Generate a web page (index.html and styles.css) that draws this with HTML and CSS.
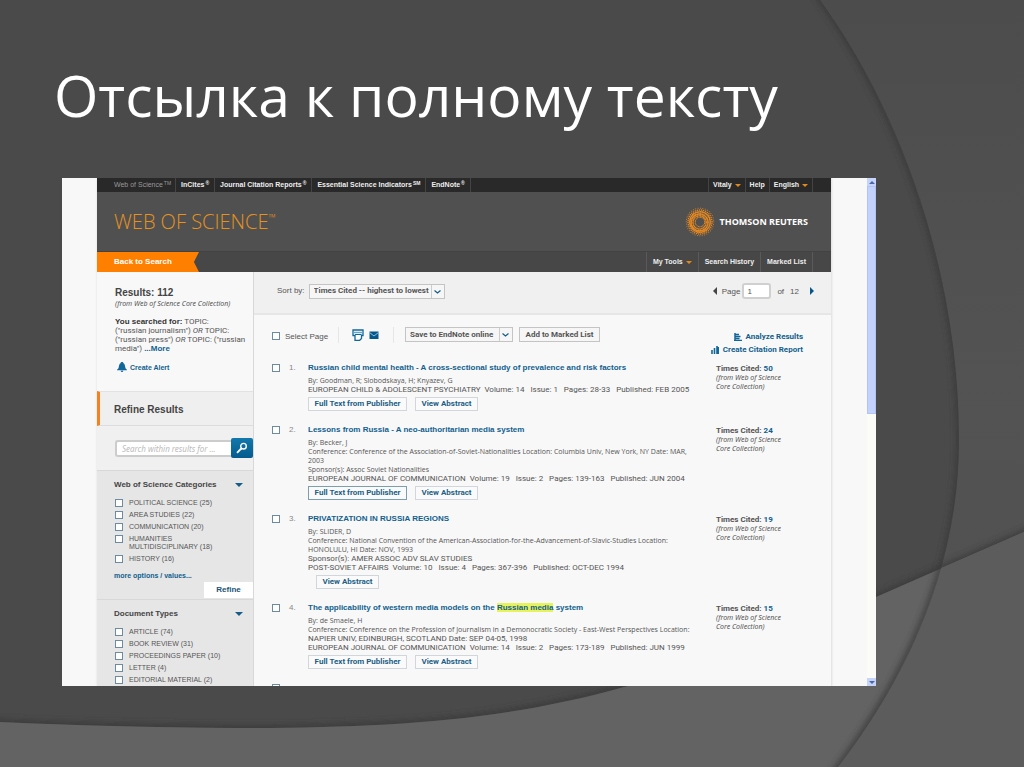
FILE: index.html
```html
<!DOCTYPE html>
<html lang="ru">
<head>
<meta charset="utf-8">
<title>Отсылка к полному тексту</title>
<link rel="stylesheet" href="styles.css">
</head>
<body>
<svg class="backdrop" viewBox="0 0 1024 767" preserveAspectRatio="none" aria-hidden="true">
  <defs>
    <linearGradient id="right" x1="0" y1="0" x2="0" y2="1"><stop offset="0" stop-color="#4c4c4c"/><stop offset=".5" stop-color="#535353"/><stop offset="1" stop-color="#505050"/></linearGradient>
    <filter id="soft" x="-10%" y="-10%" width="120%" height="120%"><feGaussianBlur stdDeviation="3"/></filter>
    <clipPath id="outside"><path d="M0 0H820C900 110 959 270 959 440C959 570 905 680 838 767H0Z"/></clipPath>
    <clipPath id="above"><path d="M0 0H1024V532L876 597C760 648 690 670 624 687C500 722 380 728 235 728Q110 727 0 722Z"/></clipPath>
  </defs>
  <path fill="url(#right)" d="M820 0C900 110 959 270 959 440C959 570 905 680 838 767H1024V0Z"/>
  <g clip-path="url(#above)"><path class="shade" filter="url(#soft)" d="M-10 722Q110 727 235 728C380 728 500 722 624 687C690 670 760 648 876 597L1034 528"/></g>
  <path fill="#636363" d="M0 722Q110 727 235 728C380 728 500 722 624 687C690 670 760 648 876 597L1024 532V767H0Z"/>
  <path fill="#5c5c5c" d="M941 568L1024 532V767H838C880 710 920 645 941 568Z"/>
  <g clip-path="url(#outside)"><path class="shade" filter="url(#soft)" d="M815 -8C900 110 959 270 959 440C959 570 905 680 832 775"/></g>
</svg>

<main class="slide">
  <h1 class="slide-title">Отсылка к полному тексту</h1>

  <section class="screen">
    <div class="page">
      <header>
        <div class="topbar">
          <nav class="links">
            <a class="current" href="#">Web of Science <sup>TM</sup></a>
            <a href="#">InCites <sup>®</sup></a>
            <a href="#">Journal Citation Reports <sup>®</sup></a>
            <a href="#">Essential Science Indicators <sup>SM</sup></a>
            <a href="#">EndNote <sup>®</sup></a>
          </nav>
          <nav class="links account">
            <a href="#">Vitaly <i class="tri"></i></a>
            <a href="#">Help</a>
            <a href="#">English <i class="tri"></i></a>
          </nav>
        </div>
        <div class="brand">
          <div class="wos">WEB OF SCIENCE<sup>™</sup></div>
          <div class="thomson">
            <svg class="swirl" viewBox="0 0 30 30" aria-hidden="true">
              <g fill="none" stroke="#e98a20" stroke-linecap="round">
                <circle cx="15" cy="15" r="13.8" stroke-width="1" stroke-dasharray="0 2.41"/>
                <circle cx="15" cy="15" r="12" stroke-width="1.5" stroke-dasharray="0 2.09" transform="rotate(6 15 15)"/>
                <circle cx="15" cy="15" r="10.200" stroke-width="1.900" stroke-dasharray="0 1.780" transform="rotate(12 15 15)"/>
                <circle cx="14.600" cy="15.400" r="8.400" stroke-width="1.900" stroke-dasharray="0 1.760"/>
                <circle cx="14.600" cy="15.400" r="6.600" stroke-width="1.600" stroke-dasharray="0 1.600"/>
                <circle cx="15" cy="15" r="4.800" stroke-width="1.200" stroke-dasharray="0 1.500"/>
              </g>
            </svg>
            <span>THOMSON REUTERS</span>
          </div>
        </div>
        <div class="navbar">
          <a class="back" href="#">Back to Search</a>
          <nav class="tools">
            <a href="#">My Tools <i class="tri"></i></a>
            <a href="#">Search History</a>
            <a href="#">Marked List</a>
          </nav>
        </div>
      </header>

      <div class="columns">
        <aside class="sidebar">
          <div class="summary">
            <h2>Results: 112</h2>
            <p class="source">(from Web of Science Core Collection)</p>
            <p class="query"><b>You searched for:</b> TOPIC:<br>("russian journalism") <i>OR</i> TOPIC:<br>("russian press") <i>OR</i> TOPIC: ("russian<br>media") <a href="#">...More</a></p>
            <a class="alert" href="#"><svg viewBox="0 0 10 10" aria-hidden="true"><path fill="#12679a" d="M5 0C6 0 6.4.7 6.5 1.2C8 2 8 4 8.3 5.5C8.5 6.6 9.2 7.2 10 7.7V8.3H0V7.7C.8 7.2 1.5 6.6 1.7 5.5C2 4 2 2 3.5 1.2C3.6.7 4 0 5 0ZM3.6 8.8H6.4Q6.2 10 5 10T3.600 8.800Z"/></svg>Create Alert</a>
          </div>
          <h2 class="refine-title">Refine Results</h2>
          <form class="search">
            <input type="text" aria-label="Search within results" placeholder="Search within results for ...">
            <button type="button" aria-label="Search"><svg viewBox="0 0 12 12" aria-hidden="true"><circle cx="7.500" cy="4.200" r="2.800" fill="none" stroke="#fff" stroke-width="1.400"/><path d="M5.300 6.500L1.500 10.300" stroke="#fff" stroke-width="1.800" stroke-linecap="round"/></svg></button>
          </form>
          <fieldset class="facet">
            <legend><span>Web of Science Categories</span><i class="tri blue"></i></legend>
            <label><input type="checkbox"><span>POLITICAL SCIENCE (25)</span></label>
            <label><input type="checkbox"><span>AREA STUDIES (22)</span></label>
            <label><input type="checkbox"><span>COMMUNICATION (20)</span></label>
            <label><input type="checkbox"><span>HUMANITIES<br>MULTIDISCIPLINARY (18)</span></label>
            <label><input type="checkbox"><span>HISTORY (16)</span></label>
            <a class="more" href="#">more options / values...</a>
            <button class="refine" type="button">Refine</button>
          </fieldset>
          <fieldset class="facet">
            <legend><span>Document Types</span><i class="tri blue"></i></legend>
            <label><input type="checkbox"><span>ARTICLE (74)</span></label>
            <label><input type="checkbox"><span>BOOK REVIEW (31)</span></label>
            <label><input type="checkbox"><span>PROCEEDINGS PAPER (10)</span></label>
            <label><input type="checkbox"><span>LETTER (4)</span></label>
            <label><input type="checkbox"><span>EDITORIAL MATERIAL (2)</span></label>
          </fieldset>
        </aside>

        <div class="content">
          <div class="sortbar">
            <label class="sort">Sort by:
              <select class="drop sort-drop"><option>Times Cited -- highest to lowest</option></select>
            </label>
            <div class="pager">
              <button type="button" class="prev" aria-label="Previous page"></button>
              <label>Page <input type="text" value="1"></label>
              <span>of</span><span>12</span>
              <button type="button" class="next" aria-label="Next page"></button>
            </div>
          </div>

          <div class="actions">
            <label class="select-page"><input type="checkbox">Select Page</label>
            <div class="icons">
              <button type="button" aria-label="Print"><svg viewBox="0 0 12 12" aria-hidden="true"><path d="M1 1H11V6.500H9.500V9.500L7.500 11.500H3V6.500H1Z" fill="#fff" stroke="#12679a" stroke-width="1.300"/><path d="M2 3.500H10" stroke="#5fa6cb" stroke-width="1.500"/><path d="M3 5.500H9.500" stroke="#12679a"/></svg></button>
              <button type="button" aria-label="E-mail"><svg viewBox="0 0 12 12" aria-hidden="true"><path d="M1.500 2.500H10.500V10H1.500Z" fill="#07588a"/><path d="M1.500 3.500L6 7L10.500 3.500" fill="none" stroke="#8ec3df"/></svg></button>
            </div>
            <select class="drop save-drop" aria-label="Save"><option>Save to EndNote online</option></select>
            <button class="marked" type="button">Add to Marked List</button>
            <div class="reports">
              <a href="#"><svg viewBox="0 0 8 8" aria-hidden="true"><path d="M1 0V8M1 1.500H5M1 3.500H6.500M1 5.500H5.500M0 7.500H8" stroke="#12679a" stroke-width="1.500"/></svg>Analyze Results</a>
              <a href="#"><svg viewBox="0 0 8 8" aria-hidden="true"><path d="M1 8V4M3.500 8V2M6 8V0M7.500 8V1" stroke="#12679a" stroke-width="1.600"/></svg>Create Citation Report</a>
            </div>
          </div>

          <ol class="results">
            <li>
              <input type="checkbox" aria-label="Select record 1"><span class="num">1.</span>
              <article>
                <h3><a href="#">Russian child mental health - A cross-sectional study of prevalence and risk factors</a></h3>
                <p>By: Goodman, R; Slobodskaya, H; Knyazev, G</p>
                <p class="journal">EUROPEAN CHILD &amp; ADOLESCENT PSYCHIATRY&nbsp; Volume: 14 &nbsp; Issue: 1 &nbsp; Pages: 28-33 &nbsp; Published: FEB 2005</p>
                <div class="buttons"><button type="button">Full Text from Publisher</button><button type="button">View Abstract</button></div>
              </article>
              <p class="cited"><b>Times Cited: <a href="#">50</a></b><br><i>(from Web of Science<br>Core Collection)</i></p>
            </li>
            <li>
              <input type="checkbox" aria-label="Select record 2"><span class="num">2.</span>
              <article>
                <h3><a href="#">Lessons from Russia - A neo-authoritarian media system</a></h3>
                <p>By: Becker, J<br>Conference: Conference of the Association-of-Soviet-Nationalities Location: Columbia Univ, New York, NY Date: MAR,<br>2003<br>Sponsor(s): Assoc Soviet Nationalities</p>
                <p class="journal">EUROPEAN JOURNAL OF COMMUNICATION&nbsp; Volume: 19 &nbsp; Issue: 2 &nbsp; Pages: 139-163 &nbsp; Published: JUN 2004</p>
                <div class="buttons"><button class="active" type="button">Full Text from Publisher</button><button type="button">View Abstract</button></div>
              </article>
              <p class="cited"><b>Times Cited: <a href="#">24</a></b><br><i>(from Web of Science<br>Core Collection)</i></p>
            </li>
            <li>
              <input type="checkbox" aria-label="Select record 3"><span class="num">3.</span>
              <article>
                <h3><a href="#">PRIVATIZATION IN RUSSIA REGIONS</a></h3>
                <p>By: SLIDER, D<br>Conference: National Convention of the American-Association-for-the-Advancement-of-Slavic-Studies Location:<br>HONOLULU, HI Date: NOV, 1993</p>
                <p class="journal">Sponsor(s): AMER ASSOC ADV SLAV STUDIES<br>POST-SOVIET AFFAIRS&nbsp; Volume: 10 &nbsp; Issue: 4 &nbsp; Pages: 367-396 &nbsp; Published: OCT-DEC 1994</p>
                <div class="buttons lone"><button type="button">View Abstract</button></div>
              </article>
              <p class="cited"><b>Times Cited: <a href="#">19</a></b><br><i>(from Web of Science<br>Core Collection)</i></p>
            </li>
            <li>
              <input type="checkbox" aria-label="Select record 4"><span class="num">4.</span>
              <article>
                <h3><a href="#">The applicability of western media models on the <mark>Russian media</mark> system</a></h3>
                <p>By: de Smaele, H<br>Conference: Conference on the Profession of Journalism in a Demonocratic Society - East-West Perspectives Location:</p>
                <p class="journal">NAPIER UNIV, EDINBURGH, SCOTLAND Date: SEP 04-05, 1998<br>EUROPEAN JOURNAL OF COMMUNICATION&nbsp; Volume: 14 &nbsp; Issue: 2 &nbsp; Pages: 173-189 &nbsp; Published: JUN 1999</p>
                <div class="buttons"><button type="button">Full Text from Publisher</button><button type="button">View Abstract</button></div>
              </article>
              <p class="cited"><b>Times Cited: <a href="#">15</a></b><br><i>(from Web of Science<br>Core Collection)</i></p>
            </li>
            <li><input type="checkbox" aria-label="Select record 5"></li>
          </ol>
        </div>
      </div>
    </div>
    <div class="scrollbar" aria-hidden="true"><i class="arrow up"></i><i class="thumb"></i><i class="arrow down"></i></div>
  </section>
</main>
</body>
</html>
```
FILE: styles.css
```css
* { box-sizing: border-box; }
body { margin: 0; min-height: 100vh; background: #4a4a4a; font: 8px/9px "Liberation Sans", Arial, sans-serif; color: #555; overflow: hidden; }
h1, h2, h3, p, ol { margin: 0; padding: 0; }
a { color: #12608d; text-decoration: none; }
button, input, select { font: inherit; color: inherit; margin: 0; padding: 0; border: 0; background: none; border-radius: 0; }
button { cursor: pointer; }

.backdrop { position: absolute; inset: 0; width: 100%; height: 100%; }
.shade { fill: none; stroke: #383838; stroke-width: 5; }
.slide { position: relative; height: 100vh; padding: 0 148px 81px 62px; display: flex; flex-direction: column; }
.slide-title { height: 178px; flex: none; padding-top: 57px; margin-left: -8px; font: 400 57px/76px "Open Sans", sans-serif; color: #fff; white-space: nowrap; }

.screen { flex: 1; min-height: 0; display: flex; overflow: hidden; background: #f8f8f8; }
.page { flex: 1; min-width: 0; margin: 0 35px; display: flex; flex-direction: column; border-right: 1px solid #e6e6e6; box-shadow: 0 0 2px #ddd; }
.tri { display: inline-block; margin-left: 1px; border: 3px solid transparent; border-top-color: #e08a1c; border-bottom: 0; vertical-align: middle; }
.tri.blue { border-width: 4px 4px 0; border-top-color: #155d86; }

.topbar { display: flex; justify-content: space-between; height: 14px; padding: 0 18px 0 12px; background: #292929; }
.links { display: flex; }
.links a { padding: 0 5px; border-right: 1px solid #444; color: #eee; font-size: 7px; line-height: 14px; font-weight: 700; white-space: nowrap; }
.links .current { color: #999; font-weight: 400; padding-right: 4px; }
.links sup { font-size: 5px; line-height: 0; vertical-align: 2px; margin-left: -1px; }
.links.account a { padding: 0 4px; }
.account a:first-child { border-left: 1px solid #444; }

.brand { display: flex; justify-content: space-between; align-items: center; height: 59px; padding: 0 23px 0 17px; background: #505050; }
.wos { font: 300 20px/24px "Open Sans", sans-serif; color: #e8921c; white-space: nowrap; }
.wos sup { font-size: 10px; line-height: 0; }
.thomson { display: flex; align-items: center; gap: 5px; color: #fff; font: 700 9px/14px "Open Sans", sans-serif; white-space: nowrap; }
.swirl { width: 30px; height: 30px; }
.navbar { display: flex; justify-content: space-between; height: 21px; padding-right: 18px; background: #474747; border-top: 1px solid #424242; }
.back { width: 102px; padding-left: 17px; background: #ff8000; color: #fff; font-weight: 700; line-height: 20px; clip-path: polygon(0 0, 100% 0, 95% 50%, 100% 100%, 0 100%); }
.tools { display: flex; }
.tools a { padding: 0 6px; border-left: 1px solid #5a5a5a; color: #eee; font-size: 7px; font-weight: 700; line-height: 20px; white-space: nowrap; }
.tools a:last-child { border-right: 1px solid #5a5a5a; }

.columns { flex: 1; min-height: 0; display: flex; }
.sidebar { width: 157px; flex: none; background: #e6e6e6; border-right: 1px solid #d8d8d8; }
.summary { height: 119px; padding: 15px 0 0 18px; background: #f8f8f8; white-space: nowrap; }
.summary h2, .refine-title { font-size: 10px; line-height: 12px; color: #444; }
.source { font: italic 7px/9px "Noto Sans", sans-serif; }
.query { margin-top: 9px; font: 8px/9px Roboto, sans-serif; }
.query b { color: #333; }
.query b, .query a { font: 700 8px/9px "Liberation Sans", sans-serif; }
.alert { display: flex; align-items: center; gap: 3px; margin-top: 9px; padding-left: 2px; font-size: 7px; font-weight: 700; }
.alert svg { width: 10px; height: 10px; }
.refine-title { height: 35px; padding: 12px 0 0 14px; border-left: 3px solid #f58220; border-bottom: 1px solid #ddd; border-top: 1px solid #e2e2e2; background: #efefef; }
.search { display: flex; align-items: center; height: 44px; padding-left: 18px; background: #f0f0f0; }
.search input { flex: 1; min-width: 0; height: 17px; padding-left: 5px; border: 2px solid #ccc; border-right: 0; border-radius: 3px 0 0 3px; background: #fff; font: italic 8px/12px "Noto Sans", sans-serif; }
.search input::placeholder { color: #bbb; }
.search button { width: 22px; height: 20px; border-radius: 2px; background: linear-gradient(#1278ac, #055b8d); }
.search svg { width: 12px; height: 12px; display: block; margin: auto; }

.facet { margin: 0; padding: 0 0 0 17px; border: 0; border-top: 1px solid #d8d8d8; font-size: 7px; line-height: 8px; display: flex; flex-direction: column; white-space: nowrap; }
.facet legend { float: left; display: flex; justify-content: space-between; align-items: center; width: 100%; padding: 8px 10px 7px 0; font-size: 8px; line-height: 11px; font-weight: 700; color: #444; }
.facet label { display: flex; gap: 6px; align-items: flex-start; min-height: 12px; padding: 2px 0 2px 1px; }
input[type="checkbox"] { appearance: none; flex: none; width: 8px; height: 8px; border: 1px solid #6d8ba0; background: #fff; }
.more { margin-top: 6px; font-weight: 700; line-height: 9px; }
.refine { align-self: flex-end; width: 49px; height: 16px; margin: 2px 0 1px; background: #fff; color: #1a5577; font-size: 8px; font-weight: 700; }

.content { flex: 1; min-width: 0; }
.sortbar { display: flex; justify-content: space-between; align-items: flex-start; height: 43px; padding: 11px 17px 0 23px; background: #f0f0f0; border-bottom: 2px solid #e6e6e6; }
.sort { display: flex; align-items: center; gap: 4px; line-height: 16px; white-space: nowrap; }
.drop, .marked { height: 15px; border: 1px solid #c4c4c4; background-color: #f6f6f6; font: 700 8px/12px Roboto, sans-serif; color: #555; white-space: nowrap; }
.drop { appearance: none; padding: 0 0 0 4px; background-repeat: no-repeat; background-position: right 1px center; background-image: url("data:image/svg+xml,%3Csvg xmlns='http://www.w3.org/2000/svg' width='12' height='13'%3E%3Cpath d='M.5 0V13' stroke='%23ccc'/%3E%3Cpath d='M3.500 5.500L6.500 8L9.500 5.500' fill='none' stroke='%23155d86' stroke-width='1.200'/%3E%3C/svg%3E"); }
.sort-drop { width: 136px; }
.save-drop { width: 108px; margin-left: 11px; }
.marked { width: 81px; margin-left: 6px; }
.pager { display: flex; align-items: center; gap: 6px; }
.pager label { display: flex; align-items: center; gap: 2px; }
.pager input { width: 29px; height: 16px; padding-left: 3px; border: 2px solid #d0d0d0; border-radius: 3px; background: #fff; }
.prev, .next { border: 4px solid transparent; }
.prev { border-left: 0; border-right-color: #444; margin-right: -1px; }
.next { border-right: 0; border-left-color: #07588a; margin-left: 5px; }

.actions { display: flex; align-items: flex-start; height: 47px; padding: 12px 28px 0 18px; white-space: nowrap; }
.select-page { display: flex; align-items: center; gap: 5px; height: 18px; width: 66px; }
.icons { display: flex; gap: 4px; align-items: center; justify-content: center; width: 56px; height: 16px; border: 1px solid #e6e6e6; border-width: 0 1px; }
.icons svg { width: 12px; height: 12px; display: block; }
.reports { margin-left: auto; padding-top: 5px; display: flex; flex-direction: column; align-items: flex-end; gap: 4px; font: 700 8px/9px Roboto, sans-serif; }
.reports a { display: flex; align-items: center; gap: 4px; }
.reports svg { width: 8px; height: 8px; }

.results { list-style: none; }
.results li { display: flex; align-items: flex-start; padding: 0 43px 13px 18px; }
.results li > input { margin-top: 2px; }
.num { width: 28px; padding-left: 9px; line-height: 12px; flex: none; color: #888; }
article { flex: 1; min-width: 0; white-space: nowrap; }
article p { font: 7px/9px "Open Sans", sans-serif; }
article .journal { font: 8px/9px Roboto, sans-serif; }
h3 { font-size: 8px; line-height: 12px; margin-bottom: 2px; }
mark { background: #e8f25a; color: inherit; }
.buttons { display: flex; gap: 8px; margin-top: 3px; }
.buttons.lone { padding-left: 8px; }
.buttons button { width: 63px; height: 14px; border: 1px solid #d0d6da; background: #fafafa; color: #1d5f86; font: 700 8px/10px Roboto, sans-serif; }
.buttons button:first-child:not(:last-child) { width: 99px; }
.buttons .active { border-color: #7d9db0; }
.cited { flex: none; width: 72px; padding-top: 2px; }
.cited b { font-family: Roboto, sans-serif; }
.cited i { font: italic 7px/9px "Noto Sans", sans-serif; }

.scrollbar { width: 9px; flex: none; display: flex; flex-direction: column; background: #fbfbf8; }
.arrow { height: 8px; background: #c6d4fb; display: flex; align-items: center; justify-content: center; }
.arrow::before { content: ""; border: 3px solid transparent; }
.up::before { border-bottom-color: #4a67a8; border-top: 0; }
.down::before { border-top-color: #4a67a8; border-bottom: 0; }
.thumb { height: 228px; background: #c2d2fc; border: 1px solid #b2c4f2; }
.down { margin-top: auto; }
```
